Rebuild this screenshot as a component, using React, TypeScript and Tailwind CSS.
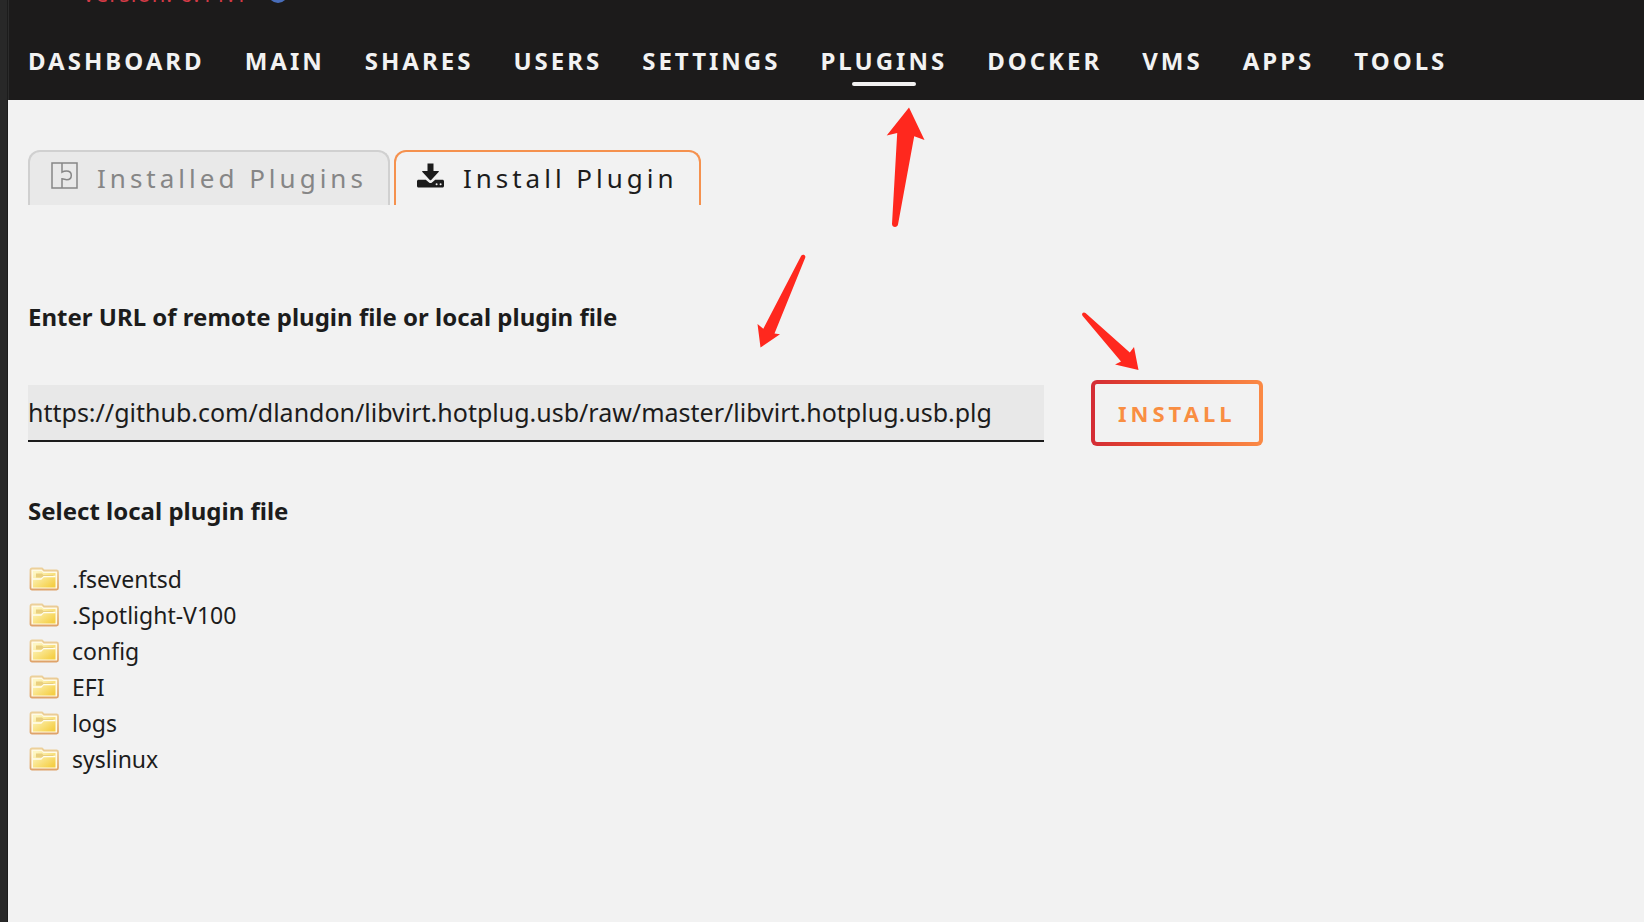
import { useState } from "react";

const NAV = ["Dashboard", "Main", "Shares", "Users", "Settings", "Plugins", "Docker", "VMs", "Apps", "Tools"];
const FOLDERS = [".fseventsd", ".Spotlight-V100", "config", "EFI", "logs", "syslinux"];

function PuzzleIcon() {
  return (
    <svg viewBox="0 0 27 27" className="size-[27px] -mt-1" fill="none" stroke="currentColor" strokeWidth="1.5" aria-hidden="true">
      <rect x="1" y="1" width="25" height="25" />
      <path d="M11 1v9.2c1.400-.9 2.800-1.300 4.400-1.300 3 0 4.900 1.700 4.900 4.300s-1.900 4.500-4.600 4.500c-1.800 0-2.800-.9-4.700-.9V26" />
    </svg>
  );
}

function DownloadIcon() {
  return (
    <svg viewBox="0 0 27 25" className="h-[25px] w-[27px] -mt-1" fill="currentColor" aria-hidden="true">
      <path d="M10.500.500h6v7.500h4.600c.7 0 1 .6.500 1.100l-7.400 7.900c-.4.400-1 .4-1.400 0L5.400 9.100c-.5-.5-.2-1.100.5-1.100h4.600z" />
      <path
        fillRule="evenodd"
        d="M1.500 16.700h7.300l3.200 2.700c.9.700 2.100.7 3 0l3.200-2.700h7.300c.8 0 1.500.7 1.500 1.500v4.900c0 .8-.7 1.500-1.500 1.500h-24C.7 24.600 0 23.900 0 23.100v-4.900c0-.8.700-1.500 1.500-1.500zM19.600 20.300a1 1 0 1 0 0 2 1 1 0 0 0 0-2zM23.600 20.300a1 1 0 1 0 0 2 1 1 0 0 0 0-2z"
      />
    </svg>
  );
}

function FolderIcon() {
  return (
    <svg viewBox="0 0 30 24" className="h-6 w-[30px] shrink-0" aria-hidden="true">
      <defs>
        <linearGradient id="folder-face" x1="0" y1="0" x2="1" y2="1">
          <stop offset="0.1" stopColor="#fdf6c4" />
          <stop offset="0.9" stopColor="#f5cf45" />
        </linearGradient>
        <linearGradient id="folder-edge" x1="0" y1="0" x2="0" y2="1">
          <stop offset="0" stopColor="#ecd09a" />
          <stop offset="1" stopColor="#dfa36a" />
        </linearGradient>
      </defs>
      <path d="M3 1.500h10l2 2h12.500a1.500 1.500 0 0 1 1.500 1.500v16a1.500 1.500 0 0 1-1.500 1.500h-24.500a1.500 1.500 0 0 1-1.500-1.500v-18a1.500 1.500 0 0 1 1.500-1.500z" fill="#fffbe6" stroke="url(#folder-edge)" strokeWidth="1.800" />
      <path d="M4 4h8.500l2 2H26.500v14.500H4z" fill="url(#folder-face)" />
      <path d="M4 12h8l2.500-2.500h12" fill="none" stroke="#fffdf0" strokeWidth="1.300" />
      <path d="M7 6.500h6l1.500 1.500h10v1h-10L13 10.500H7z" fill="#e9cf7e" />
    </svg>
  );
}

function Arrows() {
  return (
    <svg className="pointer-events-none absolute left-0 top-0 h-[400px] w-[1200px]" viewBox="0 0 1200 400" fill="#ff281e" aria-hidden="true">
      <path d="M909 107.500l15.500 32.500-10.300-3.800L898 224.500c-.5 3.500-6 3.300-6-.5l5.200-91-10.500 2.500z" />
      <path d="M760.500 347.500L757.500 324l5.800 4.700L801.200 255.800c1.500-2.300 5-.8 4 2L774.500 333.500l5.500.8z" />
      <path d="M1138.500 370L1134 347l-4.200 5.500L1085.500 313c-2-1.500-4.500.5-3 2.700L1121 361.500l-6 3z" />
    </svg>
  );
}

export default function App() {
  const [url, setUrl] = useState("https://github.com/dlandon/libvirt.hotplug.usb/raw/master/libvirt.hotplug.usb.plg");
  return (
    <div className="relative flex min-h-screen bg-[#f2f2f2] font-['Noto_Sans',sans-serif] text-[#1c1c1c]">
      <div className="w-2 shrink-0 border-r border-[#1c1c1c] bg-[#282828]" />
      <div className="min-w-0 grow">
        <header className="h-[100px] overflow-hidden border-l border-[#2c2c2c] bg-[#1c1b1b] pl-[19px]">
          <div className="-mt-[21px] flex h-7 items-center gap-5 pl-[54px] text-[22px] leading-7 tracking-[1px] text-[#d33a46]">
            <span>Version: 6.11.1</span>
            <span className="size-5 rounded-full bg-[#486dba]" />
          </div>
          <nav className="mt-[29px] flex gap-10 text-2xl font-bold uppercase tracking-[3px] text-[#f2f2f2]">
            {NAV.map((item) => (
              <a key={item} href={"#" + item.toLowerCase()} className="relative py-[9px] leading-8">
                {item}
                {item === "Plugins" && <span className="absolute bottom-0 left-1/2 h-1 w-16 -translate-x-1/2 rounded-sm bg-[#f2f2f2]" />}
              </a>
            ))}
          </nav>
        </header>

        <main className="px-5 pt-[50px]">
          <div role="tablist" className="flex gap-1 text-[26px] leading-8">
            <button role="tab" aria-selected="false" className="flex h-[55px] items-center gap-[19px] rounded-t-xl border-2 border-b-0 border-[#d0d0d0] bg-[#e9e9e9] px-[21px] pb-0.5 tracking-[4px] text-[#868686]">
              <PuzzleIcon />
              Installed Plugins
            </button>
            <button role="tab" aria-selected="true" className="flex h-[55px] items-center gap-[19px] rounded-t-xl border-2 border-b-0 border-[#f5914e] px-[21px] pb-0.5 tracking-[4px]">
              <DownloadIcon />
              Install Plugin
            </button>
          </div>

          <form onSubmit={(e) => e.preventDefault()} className="mt-24">
            <label htmlFor="plugin-url" className="block text-2xl font-bold leading-8">
              Enter URL of remote plugin file or local plugin file
            </label>
            <div className="mt-[47px] flex items-center gap-[47px]">
              <input
                id="plugin-url"
                type="text"
                value={url}
                onChange={(e) => setUrl(e.target.value)}
                className="h-[57px] min-w-0 max-w-[1016px] grow border-b-2 border-[#1c1c1c] bg-[#e8e8e8] text-[25px] outline-none"
              />
              <button
                type="submit"
                className="h-[66px] shrink-0 rounded-md border-4 border-transparent px-[23px] text-[22px] font-bold tracking-[4px] text-[#f98e42] [background:linear-gradient(#f2f2f2,#f2f2f2)_padding-box,linear-gradient(90deg,#d42c35,#e8502f_40%,#fb8a45)_border-box]"
              >
                INSTALL
              </button>
            </div>
          </form>

          <section className="mt-[49px]">
            <h2 className="text-2xl font-bold leading-8">Select local plugin file</h2>
            <ul className="mt-[34px] pl-px text-[23px] leading-9">
              {FOLDERS.map((name) => (
                <li key={name}>
                  <a href={"#" + name} className="flex items-center gap-[13px]">
                    <FolderIcon />
                    {name}
                  </a>
                </li>
              ))}
            </ul>
          </section>
        </main>
      </div>
      <Arrows />
    </div>
  );
}
